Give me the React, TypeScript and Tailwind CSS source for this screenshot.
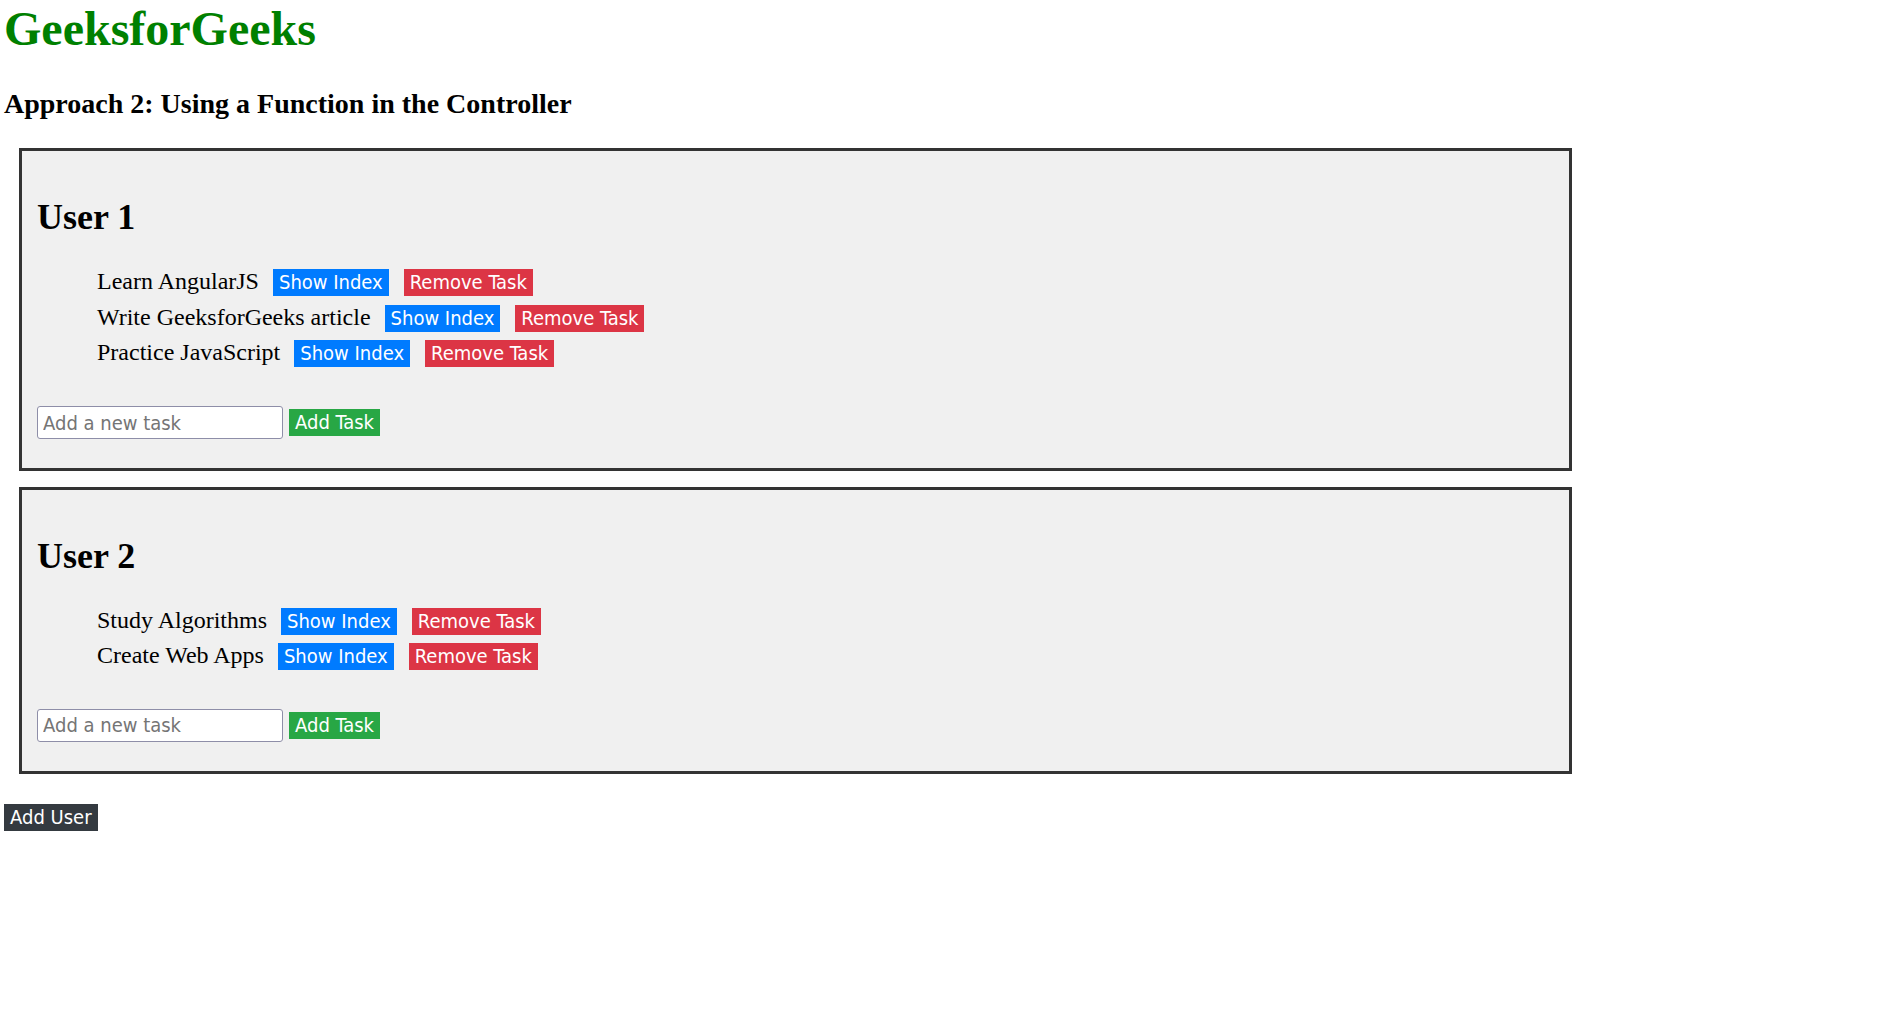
import React from 'react';

interface User {
  name: string;
  tasks: string[];
}

const users: User[] = [
  { name: 'User 1', tasks: ['Learn AngularJS', 'Write GeeksforGeeks article', 'Practice JavaScript'] },
  { name: 'User 2', tasks: ['Study Algorithms', 'Create Web Apps'] },
];

const btn =
  "font-['DejaVu_Sans_Condensed','Liberation_Sans',sans-serif] text-[20px] leading-[23px] py-[2px] px-[6px] text-white cursor-pointer";

const UserBox: React.FC<{ user: User; first: boolean }> = ({ user, first }) => {
  return (
    <div
      className={`${first ? '' : 'mt-[15.7px]'} border-[3px] border-[#333333] bg-[#f0f0f0] px-[15px] pt-[46px] pb-[29px]`}
    >
      <h2 className="text-[36px] leading-[40px] font-bold">{user.name}</h2>

      <ul className="mt-[30.8px] pl-[60px] flex flex-col">
        {user.tasks.map((task) => (
          <li key={task} className="h-[35.6px] flex items-baseline">
            <span className="text-[24px] leading-[26.6px]">{task}</span>
            <button className={`${btn} ml-[14px] bg-[#007bff]`}>Show Index</button>
            <button className={`${btn} ml-[15px] bg-[#dc3545]`}>Remove Task</button>
          </li>
        ))}
      </ul>

      {/* new task form */}
      <div className="mt-[31.2px] flex items-center">
        <input
          type="text"
          placeholder="Add a new task"
          className="w-[246px] h-[33px] bg-white border border-[#8e8ea8] rounded-[3px] pl-[5px] font-['DejaVu_Sans_Condensed','Liberation_Sans',sans-serif] text-[20px] placeholder:text-[#757575] outline-none"
        />
        <button className={`${btn} ml-[6px] bg-[#28a745]`}>Add Task</button>
      </div>
    </div>
  );
};

const App: React.FC = () => {
  return (
    <div className="min-h-screen bg-white px-[4px] text-black font-['Liberation_Serif','Times_New_Roman',serif]">
      <h1 className="pt-[1.5px] text-[48px] leading-[53px] font-bold text-[#008000]">GeeksforGeeks</h1>
      <h3 className="mt-[33.5px] text-[28px] leading-[31px] font-bold">
        Approach 2: Using a Function in the Controller
      </h3>

      <div className="ml-[15px] mt-[29.3px] w-[1553px]">
        {users.map((u, i) => (
          <UserBox key={u.name} user={u} first={i === 0} />
        ))}
      </div>

      <button className={`${btn} mt-[30.5px] bg-[#343a40]`}>Add User</button>
    </div>
  );
};

export default App;
